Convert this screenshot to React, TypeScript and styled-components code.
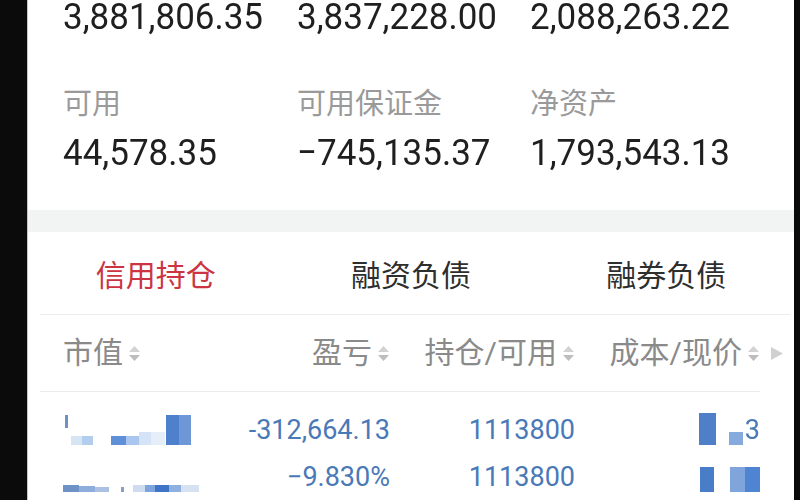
import React from "react";
import styled, { createGlobalStyle } from "styled-components";

const GlobalStyle = createGlobalStyle`
  html, body {
    margin: 0;
    padding: 0;
    background: #0b0b0b;
  }
`;

const Screen = styled.div`
  width: 800px;
  height: 500px;
  overflow: hidden;
  display: flex;
  box-sizing: border-box;
  padding: 0 6px 0 27px;
  background: #0b0b0b;
  font-family: Roboto, "Noto Sans CJK SC", sans-serif;
`;

const Panel = styled.div`
  flex: 1;
  display: flex;
  flex-direction: column;
  background: #fff;
  border-left: 1px solid #c4c4c4;
`;

const Summary = styled.div`
  display: grid;
  grid-template-columns: 234px 233px 1fr;
  padding: 2px 0 42px 35px;
`;

const Value = styled.div`
  font-size: 35px;
  line-height: 30px;
  color: #1f1f1f;
  white-space: nowrap;
  transform: scaleY(1.08);
  transform-origin: left center;
`;

const Field = styled.div`
  display: flex;
  flex-direction: column;
  gap: 19px;
  margin-top: 57px;
`;

const Label = styled.div`
  font-size: 29px;
  line-height: 30px;
  color: #9a9a9a;
`;

const Band = styled.div`
  height: 22px;
  background: #f2f3f3;
`;

const Tabs = styled.div`
  display: grid;
  grid-template-columns: repeat(3, 1fr);
  height: 83px;
  align-items: center;
`;

const Tab = styled.div<{ $active?: boolean }>`
  text-align: center;
  font-size: 30px;
  line-height: 30px;
  padding-top: 5px;
  color: ${(p) => (p.$active ? "#cc3442" : "#2e2e2e")};
`;

const Rule = styled.div<{ $right: number }>`
  height: 1px;
  background: #ededed;
  margin: 0 ${(p) => p.$right}px 0 12px;
`;

const Columns = styled.div<{ $height: number }>`
  display: grid;
  grid-template-columns: 150px 177px 185px 185px 1fr;
  padding-left: 35px;
  height: ${(p) => p.$height}px;
  align-items: center;
`;

const HeadCell = styled.div<{ $end?: boolean }>`
  display: flex;
  align-items: center;
  justify-content: ${(p) => (p.$end ? "flex-end" : "flex-start")};
  gap: 5px;
  font-size: 30px;
  line-height: 30px;
  color: #8a8a8a;
  white-space: nowrap;
`;

const ArrowCell = styled.div`
  padding-left: 11px;
  display: flex;
  align-items: center;
`;

const Body = styled.div`
  padding-top: 14px;
`;

const Num = styled.div`
  text-align: right;
  font-size: 27px;
  line-height: 30px;
  color: #4a79b8;
  white-space: nowrap;
`;

const Mosaic = styled.div<{ $end?: boolean }>`
  display: flex;
  align-items: flex-end;
  justify-content: ${(p) => (p.$end ? "flex-end" : "flex-start")};
  height: 30px;
  filter: blur(0.6px);
`;

const Cell = styled.div<{ $w: number; $h: number; $c: string; $top?: boolean }>`
  width: ${(p) => p.$w}px;
  height: ${(p) => p.$h}px;
  background: ${(p) => p.$c};
  align-self: ${(p) => (p.$top ? "flex-start" : "flex-end")};
  flex: none;
`;

const Glyph = styled.span`
  font-size: 27px;
  line-height: 30px;
  color: #4a79b8;
  align-self: center;
`;

type C = [number, number, string, boolean?];

const SortIcon = () => (
  <svg width="13" height="17" viewBox="0 0 13 17">
    <polygon points="1,7 6.5,1 12,7" fill="#d2d2d2" />
    <polygon points="1,10 12,10 6.5,16" fill="#bdbdbd" />
  </svg>
);

const summaryTop = ["3,881,806.35", "3,837,228.00", "2,088,263.22"];
const summaryFields = [
  { label: "可用", value: "44,578.35" },
  { label: "可用保证金", value: "−745,135.37" },
  { label: "净资产", value: "1,793,543.13" },
];

const nameRow1: C[] = [
  [2, 0, "transparent"],
  [3, 13, "#6f90c2", true],
  [3, 0, "transparent"],
  [11, 9, "#d6e4f4"],
  [11, 9, "#b3cdee"],
  [18, 0, "transparent"],
  [15, 9, "#5f8fd6"],
  [13, 9, "#aac5ee"],
  [12, 13, "#d4e3f6"],
  [14, 13, "#e6eff9"],
  [1, 0, "transparent"],
  [13, 30, "#4f80cc"],
  [12, 30, "#6d97d6"],
];

const nameRow2: C[] = [
  [16, 7, "#6f92c6"],
  [16, 6, "#8eaddb"],
  [14, 5, "#aac1e3"],
  [12, 0, "transparent"],
  [3, 5, "#8a9fc0"],
  [9, 0, "transparent"],
  [12, 7, "#cfdcf0"],
  [10, 7, "#7da4dc"],
  [14, 7, "#3f74c6"],
  [12, 7, "#8db0e0"],
  [18, 7, "#d6e1f2"],
];

const priceRow2: C[] = [
  [14, 25, "#4a7dc8"],
  [16, 0, "transparent"],
  [15, 25, "#7fa5dc"],
  [15, 25, "#4f84d2"],
];

const renderCells = (cells: C[]) =>
  cells.map(([w, h, c, top], i) => (
    <Cell key={i} $w={w} $h={h} $c={c} $top={top} />
  ));

export default function App() {
  return (
    <>
      <GlobalStyle />
      <Screen>
        <Panel>
          <Summary>
            {summaryTop.map((v) => (
              <Value key={v}>{v}</Value>
            ))}
            {summaryFields.map((f) => (
              <Field key={f.label}>
                <Label>{f.label}</Label>
                <Value>{f.value}</Value>
              </Field>
            ))}
          </Summary>
          <Band />
          <Tabs>
            <Tab $active>信用持仓</Tab>
            <Tab>融资负债</Tab>
            <Tab>融券负债</Tab>
          </Tabs>
          <Rule $right={4} />
          <Columns $height={76}>
            <HeadCell>
              市值
              <SortIcon />
            </HeadCell>
            <HeadCell $end>
              盈亏
              <SortIcon />
            </HeadCell>
            <HeadCell $end>
              持仓/可用
              <SortIcon />
            </HeadCell>
            <HeadCell $end>
              成本/现价
              <SortIcon />
            </HeadCell>
            <ArrowCell>
              <svg width="12" height="13" viewBox="0 0 12 13">
                <polygon points="0,0 12,6.5 0,13" fill="#d0d0d0" />
              </svg>
            </ArrowCell>
          </Columns>
          <Rule $right={34} />
          <Body>
            <Columns $height={47}>
              <Mosaic>{renderCells(nameRow1)}</Mosaic>
              <Num>-312,664.13</Num>
              <Num>1113800</Num>
              <Mosaic $end>
                <Cell $w={17} $h={32} $c="#4f7fc8" />
                <Cell $w={13} $h={0} $c="transparent" />
                <Cell $w={14} $h={13} $c="#86aade" />
                <Cell $w={2} $h={0} $c="transparent" />
                <Glyph>3</Glyph>
              </Mosaic>
              <div />
            </Columns>
            <Columns $height={47}>
              <Mosaic>{renderCells(nameRow2)}</Mosaic>
              <Num>−9.830%</Num>
              <Num>1113800</Num>
              <Mosaic $end>{renderCells(priceRow2)}</Mosaic>
              <div />
            </Columns>
          </Body>
        </Panel>
      </Screen>
    </>
  );
}
